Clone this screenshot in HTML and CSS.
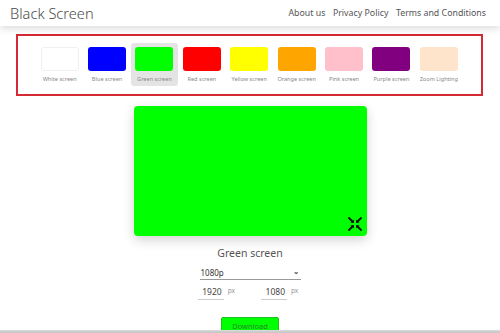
FILE: index.html
```html
<!DOCTYPE html>
<html>
<head>
<meta charset="utf-8">
<link rel="stylesheet" href="styles.css">
</head>
<body>
<header class="topbar">
  <div class="brand">Black Screen</div>
  <nav class="nav">
    <a href="#">About us</a>
    <a href="#">Privacy Policy</a>
    <a href="#">Terms and Conditions</a>
  </nav>
</header>
<section class="palette">
  <div class="item"><div class="sw white"></div><span>White screen</span></div>
  <div class="item"><div class="sw blue"></div><span>Blue screen</span></div>
  <div class="item active"><div class="sw green"></div><span>Green screen</span></div>
  <div class="item"><div class="sw red"></div><span>Red screen</span></div>
  <div class="item"><div class="sw yellow"></div><span>Yellow screen</span></div>
  <div class="item"><div class="sw orange"></div><span>Orange screen</span></div>
  <div class="item"><div class="sw pink"></div><span>Pink screen</span></div>
  <div class="item"><div class="sw purple"></div><span>Purple screen</span></div>
  <div class="item"><div class="sw bisque"></div><span>Zoom Lighting</span></div>
</section>
<main class="main">
  <div class="preview">
    <svg class="fs" viewBox="0 0 16 16" width="16" height="16">
      <g fill="none" stroke="#111" stroke-width="1.8" stroke-linecap="round">
        <path d="M2 2 L6 6 M2 14 L6 10 M14 2 L10 6 M14 14 L10 10"/>
      </g>
      <g fill="#111">
        <path d="M6.8 6.8 L3.4 6.8 L6.8 3.4 Z"/>
        <path d="M6.8 9.2 L3.4 9.2 L6.8 12.6 Z"/>
        <path d="M9.2 6.8 L12.6 6.8 L9.2 3.4 Z"/>
        <path d="M9.2 9.2 L12.6 9.2 L9.2 12.6 Z"/>
      </g>
    </svg>
  </div>
  <div class="caption">Green screen</div>
  <div class="select"><span>1080p</span><span class="chev">&#8964;</span></div>
  <div class="dims">
    <div class="dim"><span class="val">1920</span><span class="px">px</span></div>
    <div class="dim"><span class="val">1080</span><span class="px">px</span></div>
  </div>
  <button class="dl">Download</button>
</main>
<div class="bottomshade"></div>
</body>
</html>
```
FILE: styles.css
```css
* { box-sizing: border-box; }
html, body { margin: 0; padding: 0; background: #fff; overflow: hidden; }
body { font-family: "Noto Sans", "DejaVu Sans", sans-serif; color: #444; width: 500px; height: 333px; }

.topbar {
  height: 26px;
  display: flex;
  align-items: center;
  justify-content: space-between;
  padding: 0 14px 0 10px;
  position: relative;
  z-index: 1;
  box-shadow: 0 3px 7px rgba(0,0,0,0.13);
  background: #fff;
}
.brand { font-size: 14.6px; color: #4a4a4a; font-weight: 300; }
.nav { display: flex; gap: 7.5px; }
.nav a { font-size: 8.8px; color: #555; text-decoration: none; }

.palette {
  margin: 8px 17px 0 16px;
  border: 2px solid #d42a33;
  height: 62px;
  display: flex;
  padding: 7px 0 0 18px;
}
.item {
  width: 47.4px;
  height: 43px;
  display: flex;
  flex-direction: column;
  align-items: center;
  padding-top: 4px;
  border-radius: 3px;
}
.item.active { background: #e4e4e4; }
.sw { width: 38px; height: 24px; border-radius: 3px; }
.item span { font-size: 5.6px; color: #888; margin-top: 4px; white-space: nowrap; }
.white { background: #fff; border: 1px solid #f0f0f0; }
.blue { background: #0000ff; }
.green { background: #00ff00; }
.red { background: #ff0000; }
.yellow { background: #ffff00; }
.orange { background: #ffa500; }
.pink { background: #ffc0cb; }
.purple { background: #800080; }
.bisque { background: #ffe4cc; }

.main { display: flex; flex-direction: column; align-items: center; padding-top: 10px; }
.preview {
  width: 233px; height: 130px;
  background: #00ff00;
  border-radius: 4px;
  box-shadow: 0 4px 12px rgba(0,0,0,0.18);
  display: flex;
  justify-content: flex-end;
  align-items: flex-end;
  padding: 0 4px 4px 0;
}
.fs { display: block; }
.caption { font-size: 10.5px; color: #555; margin-top: 10px; }
.select {
  width: 101px;
  margin-top: 7px;
  border-bottom: 1px solid #999;
  display: flex; justify-content: space-between; align-items: center;
  font-size: 8px; color: #333; padding: 0 1px 1px 1px; height: 13px;
}
.chev { font-size: 8px; font-weight: bold; line-height: 1; position: relative; top: -2px; }
.dims { display: flex; gap: 26px; margin-top: 6px; margin-left: -4px; }
.dim { display: flex; align-items: flex-start; gap: 4px; }
.val { display: block; width: 26px; text-align: right; padding-right: 2px; font-size: 8.5px; color: #444; border-bottom: 1px solid #ccc; padding-bottom: 2px; }
.px { font-size: 6.5px; color: #999; }
.dl {
  margin-top: 17px;
  width: 58px; height: 20px;
  background: #00ff00;
  border: 1px solid #1fc21f;
  border-radius: 2px;
  color: #2f7f2f;
  font-family: inherit;
  font-size: 7.5px;
  padding: 0 0 6px 0;
  line-height: 1;
  display: flex; align-items: flex-end; justify-content: center;
}
.bottomshade {
  position: fixed; left: 0; right: 0; bottom: 0; height: 3px;
  background: linear-gradient(#dadada, #c4c4c4);
}
```
